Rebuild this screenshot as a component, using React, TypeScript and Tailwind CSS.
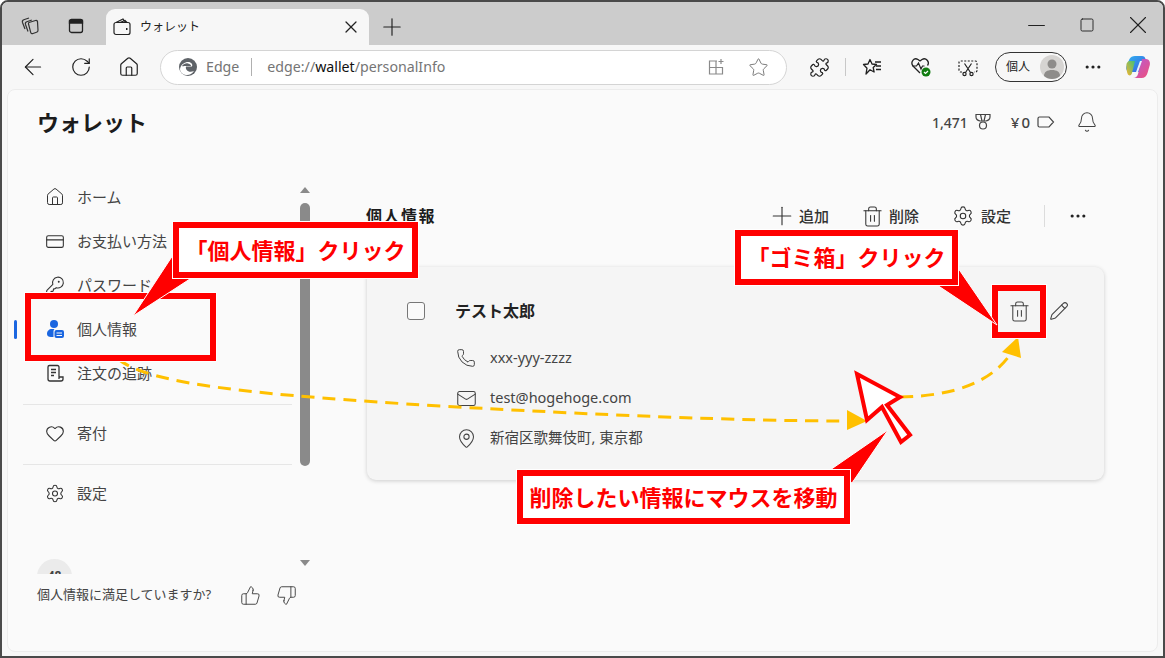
import {
  Bell,
  CreditCard,
  Ellipsis,
  Heart,
  Home,
  KeyRound,
  Mail,
  MapPin,
  Minus,
  Pencil,
  Phone,
  Plus,
  Puzzle,
  RotateCw,
  Settings,
  Square,
  Star,
  ThumbsDown,
  ThumbsUp,
  Trash2,
  ArrowLeft,
  X,
} from "lucide-react";

const navTop = [
  { label: "ホーム", icon: <Home className="size-[22px]" strokeWidth={1.2} /> },
  { label: "お支払い方法", icon: <CreditCard className="size-[21px]" strokeWidth={1.3} /> },
  { label: "パスワード", icon: <KeyRound className="size-[21px]" strokeWidth={1.3} /> },
  { label: "個人情報", icon: <PersonCard />, active: true },
  { label: "注文の追跡", icon: <Receipt /> },
];

function PersonCard() {
  return (
    <svg width="20" height="20" viewBox="0 0 20 20" fill="#1a66e0">
      <circle cx="9" cy="5" r="4" />
      <path d="M2 15c0-3 2-5 5-5h2.500a3 3 0 0 0-1 2v6H6c-2.500 0-4-1-4-3Z" />
      <rect x="9.500" y="11" width="9.500" height="8" rx="2" />
      <path d="M11.500 14h5.500M11.500 16.500h5.500" stroke="#fafafa" strokeWidth="1" />
    </svg>
  );
}

function Receipt() {
  return (
    <svg width="19" height="19" viewBox="0 0 19 19" fill="none" stroke="#333" strokeWidth="1.300">
      <path d="M13 15V3a1.500 1.500 0 0 0-1.500-1.500H3.500A1.500 1.500 0 0 0 2 3v12a2 2 0 0 0 2 2h11a2 2 0 0 0 2-2v-2h-4" />
      <path d="M5 5.500h5M5 8.500h5M5 11.500h3" />
    </svg>
  );
}

function Collections() {
  return (
    <svg width="20" height="20" viewBox="0 0 20 20" fill="none" stroke="#333" strokeWidth="1.200">
      <path d="M9 6.500 15.500 4.500c1-.3 1.800.2 2 1.200l.5 8.500c0 1-.5 1.700-1.500 2l-3.500 1.300c-1.200.4-2-.1-2.300-1.200L8.500 8c-.2-.7 0-1.300.5-1.500Z" />
      <path d="M8 15.500 5.500 8.500c-.4-1.300.2-2.300 1.300-2.700l5-1.800" />
      <path d="M5 13 2.500 6.500c-.4-1.300.2-2.300 1.300-2.700L9 2" />
    </svg>
  );
}

function TabsIcon() {
  return (
    <svg width="16" height="16" viewBox="0 0 16 16" fill="none" stroke="#222" strokeWidth="1.300">
      <rect x="1.500" y="1.500" width="13" height="13" rx="2" />
      <path d="M1.500 2.500h13v2.500h-13z" fill="#222" />
    </svg>
  );
}

function Wallet() {
  return (
    <svg width="18" height="18" viewBox="0 0 18 18" fill="none" stroke="#222" strokeWidth="1.200">
      <rect x="1" y="4.500" width="16" height="12" rx="2" />
      <path d="M3 4.500 10 1l2.500 3.500M7 4.500l5-2 2 2" />
      <path d="M13 11h1.500" strokeWidth="1.800" />
    </svg>
  );
}

function EdgeLogo() {
  return (
    <svg width="20" height="20" viewBox="0 0 20 20">
      <circle cx="10" cy="10" r="9" fill="#5f6368" />
      <path d="M2 12c1-5 5-7 8-7 3.500 0 5 2.500 4 4.500H8c-1 3 2.500 7 8 4.500-2 3-5 4.500-8 4-3.500-.5-6-3-6-6Z" fill="#fff" />
      <path d="M4 9c1.500-2 4-3 6-2.500 2 .3 3 1.500 3 2.500H8c-1.500 0-3 .5-4 0Z" fill="#5f6368" />
    </svg>
  );
}

function AppAdd() {
  return (
    <svg width="18" height="18" viewBox="0 0 18 18" fill="none" stroke="#8a8a8a" strokeWidth="1.200">
      <path d="M10 3H2.500v13h13V9M2.500 9.500h13M9 3v13M14 1v5M11.500 3.500h5" />
    </svg>
  );
}

function FavoritesList() {
  return (
    <svg width="20" height="20" viewBox="0 0 20 20" fill="none" stroke="#222" strokeWidth="1.300">
      <path d="M8 2.500 10 7l4.500.5-3.300 3 .9 4.500L8 12.700 4 17l1-5.800L1.500 7.500 6 7Z" strokeLinejoin="round" />
      <path d="M13 5h6M14 9h5M14 12.500h5" />
    </svg>
  );
}

function HealthCheck() {
  return (
    <svg width="22" height="22" viewBox="0 0 22 22" fill="none">
      <path d="M10 17 3 10C0 6 4 1 8 3.500l2 1.500 2-1.500C16 1 20 6 17.500 9.500" stroke="#222" strokeWidth="1.300" />
      <path d="M2.500 10h4l2-3 2.500 6 1.500-3h2" stroke="#222" strokeWidth="1.200" />
      <circle cx="16" cy="16" r="4.500" fill="#107c10" />
      <path d="m14 16 1.500 1.500 2.500-2.500" stroke="#fff" strokeWidth="1.200" />
    </svg>
  );
}

function ScreenshotIcon() {
  return (
    <svg width="20" height="20" viewBox="0 0 20 20" fill="none" stroke="#222" strokeWidth="1.200">
      <path d="M4 15H2.500A1.500 1.500 0 0 1 1 13.500v-8A1.500 1.500 0 0 1 2.500 4h15A1.500 1.500 0 0 1 19 5.500v8a1.500 1.500 0 0 1-1.500 1.500H16" strokeDasharray="2 1.500" />
      <path d="m6.500 6.500 6 9M13.500 6.500l-6 9" />
      <circle cx="6.500" cy="17" r="1.600" />
      <circle cx="13.500" cy="17" r="1.600" />
    </svg>
  );
}

function Copilot() {
  return (
    <svg width="26" height="26" viewBox="0 0 26 26">
      <defs>
        <linearGradient id="cpa" x1="0" y1="0" x2="1" y2="1">
          <stop offset="0" stopColor="#2fb3f0" />
          <stop offset="1" stopColor="#3b5fe0" />
        </linearGradient>
        <linearGradient id="cpb" x1="0" y1="1" x2="1" y2="0">
          <stop offset="0" stopColor="#f5b52e" />
          <stop offset="1" stopColor="#3ec07a" />
        </linearGradient>
        <linearGradient id="cpc" x1="0" y1="0" x2="1" y2="1">
          <stop offset="0" stopColor="#b45ad8" />
          <stop offset="1" stopColor="#f0507a" />
        </linearGradient>
      </defs>
      <path d="M10 2h7c2 0 3 1 3.500 3L16 18H5c-3 0-4.500-3-3.500-6l3-7C5.500 3 7.500 2 10 2Z" fill="url(#cpa)" />
      <path d="M1.500 12C1 9 3 7 5 7h5l-3 12c-.5 2-2 3-3.500 2C2 20 1.500 15 1.500 12Z" fill="url(#cpb)" />
      <path d="M17 5h4c3 0 4.500 3 3.800 6l-2.300 8c-.8 3-3 5-6 5H8c3 0 4.500-2 5-4Z" fill="url(#cpc)" />
      <path d="M11 18 15 7h2l-4 11Z" fill="#fff" opacity=".9" />
    </svg>
  );
}

function Medal() {
  return (
    <svg width="18" height="18" viewBox="0 0 18 18" fill="none" stroke="#444" strokeWidth="1.200">
      <path d="M2 1.500h14v2.500c0 2-2 3.500-4 4H6c-2-.5-4-2-4-4Z" />
      <path d="M6.500 1.500 8 8M11.500 1.500 10 8" />
      <circle cx="9" cy="12.500" r="3.500" />
    </svg>
  );
}

function TagIcon() {
  return (
    <svg width="18" height="14" viewBox="0 0 18 14" fill="none" stroke="#444" strokeWidth="1.200">
      <path d="M2.500 2h9.500l4.500 5-4.500 5H2.500A1.500 1.500 0 0 1 1 10.500v-7A1.500 1.500 0 0 1 2.500 2Z" />
    </svg>
  );
}

function Avatar() {
  return (
    <svg width="24" height="24" viewBox="0 0 24 24">
      <circle cx="12" cy="12" r="12" fill="#d6d4d2" />
      <circle cx="12" cy="9" r="4.500" fill="#8e8c8a" />
      <path d="M4 21c0-4 3-6 8-6s8 2 8 6c-2 2-5 3-8 3s-6-1-8-3Z" fill="#8e8c8a" />
    </svg>
  );
}

function NavRow({ label, icon, active }: { label: string; icon: React.ReactNode; active?: boolean }) {
  return (
    <div className="relative flex h-[44px] items-center pl-[37px] text-[15px] text-[#444]">
      {active && <span className="absolute left-[6px] top-[13px] h-[19px] w-[3px] rounded-full bg-[#1a66e0]" />}
      <span className="flex w-[20px] justify-center text-[#333]">{icon}</span>
      <span className="ml-[12px]">{label}</span>
    </div>
  );
}

function CardRow({ icon, text }: { icon: React.ReactNode; text: string }) {
  return (
    <div className="flex h-[40px] items-center pl-[88px] text-[14.5px] text-[#444]">
      <span className="flex w-[22px] justify-center text-[#444]">{icon}</span>
      <span className="ml-[13px]">{text}</span>
    </div>
  );
}

function Action({ icon, label }: { icon: React.ReactNode; label: string }) {
  return (
    <div className="flex items-center gap-[8px] text-[15px] font-medium text-[#333]">
      {icon}
      <span>{label}</span>
    </div>
  );
}

function Annotations() {
  return (
    <>
      <svg className="absolute -left-[2px] -top-[2px]" width="1165" height="658" fill="none">
        <path d="M118 359C150 385 260 395 440 406C600 415 740 421 848 421" stroke="#ffc000" strokeWidth="3" strokeDasharray="13 8" />
        <path d="M900 397C955 396 992 382 1012 352" stroke="#ffc000" strokeWidth="3" strokeDasharray="13 8" />
        <polygon points="847,410 847,430 867,421" fill="#ffc000" />
        <polygon points="1018,337 1002,352 1021,358" fill="#ffc000" />
        <polygon points="857,374 900,397 887,405 910,435 901,442 882,407 867,420" fill="#fff" stroke="#ff0000" strokeWidth="4" />
      </svg>
      <div className="absolute left-[23px] top-[291px] h-[68px] w-[191px] border-[6px] border-[#ff0000] shadow-[0_0_0_1px_#fff]" />
      <div className="absolute left-[990px] top-[283px] h-[53px] w-[54px] border-[6px] border-[#ff0000] shadow-[0_0_0_1px_#fff]" />
      <svg className="absolute -left-[2px] -top-[2px]" width="1165" height="658" fill="none">
        <polygon points="173,255 133,316 193,277" fill="#ff0000" stroke="#fff" strokeWidth="1" />
        <polygon points="958,268 997,325 937,285" fill="#ff0000" stroke="#fff" strokeWidth="1" />
        <polygon points="888,430 830,470 852,483" fill="#ff0000" stroke="#fff" strokeWidth="1" />
      </svg>
      <div className="absolute left-[171px] top-[220px] flex h-[56px] w-[245px] items-center justify-center border-[6px] border-[#ff0000] bg-white text-[22px] font-bold text-[#ff0000] shadow-[0_0_0_1px_#fff]">
        「個人情報」クリック
      </div>
      <div className="absolute left-[733px] top-[228px] flex h-[55px] w-[223px] items-center justify-center border-[6px] border-[#ff0000] bg-white text-[22px] font-bold text-[#ff0000] shadow-[0_0_0_1px_#fff]">
        「ゴミ箱」クリック
      </div>
      <div className="absolute left-[515px] top-[468px] flex h-[54px] w-[333px] items-center justify-center border-[6px] border-[#ff0000] bg-white text-[22px] font-bold text-[#ff0000] shadow-[0_0_0_1px_#fff]">
        削除したい情報にマウスを移動
      </div>
    </>
  );
}

export default function App() {
  return (
    <div className="relative box-border flex h-[658px] w-[1165px] flex-col overflow-hidden rounded-t-[8px] border-2 border-[#4a4a4a] bg-[#f7f7f7] font-['Noto_Sans','Noto_Sans_CJK_JP',sans-serif] text-[#222]">
      {/* tab strip */}
      <div className="flex h-[43px] items-end bg-[#cccccc] pl-[18px]">
        <div className="flex h-[36px] w-[86px] items-center gap-[28px] pb-[2px]">
          <Collections />
          <TabsIcon />
        </div>
        <div className="flex h-[36px] w-[263px] items-center rounded-t-[9px] bg-[#f7f7f7] pl-[7px] pr-[11px]">
          <Wallet />
          <span className="ml-[9px] text-[12px]">ウォレット</span>
          <X className="-mr-[3px] ml-auto size-[20px]" strokeWidth={1.5} />
        </div>
        <div className="flex h-[36px] w-[46px] items-center justify-center">
          <Plus className="size-[28px]" strokeWidth={1} />
        </div>
        <div className="ml-auto flex h-[36px] items-center gap-[35px] pb-[4px] pr-[17px]">
          <Minus className="-mx-[6px] size-[27px]" strokeWidth={1} />
          <Square className="size-[16px]" strokeWidth={1.4} />
          <X className="-mx-[7px] size-[30px]" strokeWidth={0.9} />
        </div>
      </div>

      {/* toolbar */}
      <div className="flex h-[44px] items-center pl-[7px]">
        <span className="flex w-[48px] justify-center"><ArrowLeft className="size-[26px]" strokeWidth={1.1} /></span>
        <span className="flex w-[48px] justify-center"><RotateCw className="size-[22px]" strokeWidth={1.3} /></span>
        <span className="flex w-[48px] justify-center"><Home className="size-[22px]" strokeWidth={1.3} /></span>
        <div className="ml-[7px] flex h-[35px] w-[627px] items-center rounded-full border border-[#d4d4d4] bg-white pl-[17px] pr-[17px] text-[14.2px] text-[#757575]">
          <EdgeLogo />
          <span className="ml-[8px]">Edge</span>
          <span className="ml-[12px] h-[18px] w-px bg-[#b0b0b0]" />
          <span className="ml-[15px]">edge://<span className="text-[#111]">wallet</span>/personalInfo</span>
          <span className="ml-auto flex items-center gap-[23px]">
            <AppAdd />
            <Star className="size-[21px] text-[#777]" strokeWidth={1.1} />
          </span>
        </div>
        <span className="ml-[12px] flex w-[40px] justify-center"><Puzzle className="size-[21px]" strokeWidth={1.4} /></span>
        <span className="ml-[6px] h-[18px] w-px bg-[#c8c8c8]" />
        <span className="ml-[6px] flex w-[40px] justify-center"><FavoritesList /></span>
        <span className="ml-[9px] flex w-[40px] justify-center"><HealthCheck /></span>
        <span className="ml-[7px] flex w-[40px] justify-center"><ScreenshotIcon /></span>
        <div className="ml-[7px] flex h-[30px] w-[72px] items-center justify-between rounded-full border-[1.5px] border-[#333] pl-[10px] pr-[2px] text-[12px]">
          個人
          <Avatar />
        </div>
        <span className="ml-[6px] flex w-[40px] justify-center"><Ellipsis className="size-[20px]" strokeWidth={1.8} /></span>
        <span className="ml-[5px] flex w-[40px] justify-center"><Copilot /></span>
      </div>

      {/* wallet page */}
      <div className="mx-[5px] mb-[4px] flex min-h-0 flex-1 flex-col rounded-[8px] border border-[#ececec] bg-[#fafafa]">
        <div className="flex h-[66px] shrink-0 items-center pb-[2px] pl-[29px] pr-[59px]">
          <h1 className="text-[22px] font-bold text-[#1c1c1c]">ウォレット</h1>
          <div className="ml-auto flex items-center text-[14px] font-medium text-[#444]">
            <span>1,471</span>
            <span className="ml-[6px]"><Medal /></span>
            <span className="ml-[19px] text-[15px] tracking-[2px]">¥0</span>
            <span className="ml-[5px]"><TagIcon /></span>
            <Bell className="ml-[21px] size-[22px]" strokeWidth={1.1} />
          </div>
        </div>

        <div className="flex min-h-0 flex-1">
          {/* sidebar */}
          <div className="flex w-[303px] shrink-0 flex-col">
            <div className="flex h-[418px] shrink-0">
              <div className="w-[291px] overflow-hidden pt-[19px]">
                {navTop.map((item) => (
                  <NavRow key={item.label} {...item} />
                ))}
                <div className="ml-[15px] mt-[9px] h-px w-[269px] bg-[#e6e6e6]" />
                <div className="mt-[6px]">
                  <NavRow label="寄付" icon={<Heart className="size-[21px]" strokeWidth={1.3} />} />
                </div>
                <div className="ml-[15px] mt-[9px] h-px w-[269px] bg-[#e6e6e6]" />
                <div className="mt-[6px]">
                  <NavRow label="設定" icon={<Settings className="size-[21px]" strokeWidth={1.3} />} />
                </div>
                <div className="ml-[29px] mt-[44px] flex h-[35px] w-[35px] justify-center rounded-full bg-[#ebebeb] pt-[8px] text-[12px] font-bold text-[#444]">
                  48
                </div>
              </div>
              <div className="flex w-[11px] flex-col items-center pt-[31px]">
                <span className="h-0 w-0 border-x-[5px] border-b-[6px] border-x-transparent border-b-[#8a8a8a]" />
                <span className="mt-[10px] h-[263px] w-[10px] rounded-full bg-[#8a8a8a]" />
                <span className="mt-[94px] h-0 w-0 border-x-[5px] border-t-[6px] border-x-transparent border-t-[#8a8a8a]" />
              </div>
            </div>
            <div className="flex h-[42px] items-center pl-[29px] text-[13px] text-[#444]">
              <span>個人情報に満足していますか?</span>
              <ThumbsUp className="ml-[29px] size-[21px]" strokeWidth={1.1} />
              <ThumbsDown className="ml-[15px] size-[21px]" strokeWidth={1.1} />
            </div>
          </div>

          {/* content */}
          <div className="pl-[56px] pt-[38px]">
            <div className="flex h-[44px] w-[737px] items-center pr-[16px]">
              <h2 className="-ml-px text-[16px] font-bold tracking-[1.5px] text-[#1c1c1c]">個人情報</h2>
              <div className="ml-auto flex items-center">
                <Action icon={<Plus className="-mx-[6px] size-[30px]" strokeWidth={0.9} />} label="追加" />
                <span className="ml-[35px]"><Action icon={<Trash2 className="-mx-[3px] size-[23px]" strokeWidth={1.1} />} label="削除" /></span>
                <span className="ml-[34px]"><Action icon={<Settings className="-mx-px size-[22px]" strokeWidth={1.2} />} label="設定" /></span>
                <span className="ml-[33px] h-[22px] w-px bg-[#dcdcdc]" />
                <Ellipsis className="ml-[23px] size-[20px]" strokeWidth={1.8} />
              </div>
            </div>
            <div className="mt-[29px] h-[213px] w-[737px] rounded-[9px] bg-[#f5f5f5] pt-[25px] shadow-[0_1px_4px_rgba(0,0,0,0.18)]">
              <div className="flex h-[38px] items-center pl-[40px] pr-[35px]">
                <span className="size-[18px] rounded-[3px] border border-[#777] bg-[#fafafa]" />
                <span className="ml-[30px] text-[16px] font-bold text-[#222]">テスト太郎</span>
                <span className="ml-auto flex items-center gap-[21px] text-[#444]">
                  <Trash2 className="-mx-[3px] size-[23px]" strokeWidth={1.1} />
                  <Pencil className="size-[20px]" strokeWidth={1.3} />
                </span>
              </div>
              <div className="mt-[8px]">
                <CardRow icon={<Phone className="size-[20px]" strokeWidth={1.2} />} text="xxx-yyy-zzzz" />
                <CardRow icon={<Mail className="size-[21px]" strokeWidth={1.2} />} text="test@hogehoge.com" />
                <CardRow icon={<MapPin className="size-[21px]" strokeWidth={1.2} />} text="新宿区歌舞伎町, 東京都" />
              </div>
            </div>
          </div>
        </div>
      </div>

      <Annotations />
    </div>
  );
}
